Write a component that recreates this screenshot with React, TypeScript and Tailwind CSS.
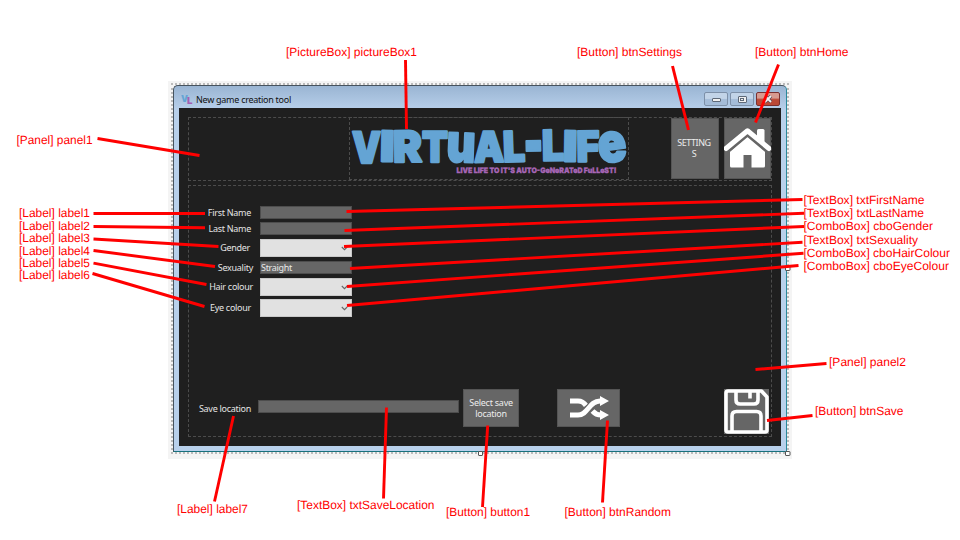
import React from "react";

type Note = { text: string; x: number; y: number; w: number; line: [number, number, number, number] };

const notes: Note[] = [
  { text: "[PictureBox] pictureBox1", x: 286, y: 56, w: 131, line: [405.5, 60, 406.5, 129] },
  { text: "[Button] btnSettings", x: 577, y: 56, w: 105, line: [672.5, 66, 688.5, 130] },
  { text: "[Button] btnHome", x: 755, y: 56, w: 93.5, line: [778.5, 64.5, 755.5, 122.5] },
  { text: "[Panel] panel1", x: 16.5, y: 143.5, w: 76, line: [97.5, 138.5, 199.5, 155.5] },
  { text: "[Label] label1", x: 19, y: 217, w: 71, line: [93.5, 213.5, 205, 213.5] },
  { text: "[Label] label2", x: 19, y: 230, w: 71, line: [93.5, 226.5, 205, 227.7] },
  { text: "[Label] label3", x: 19, y: 242.3, w: 71, line: [93.5, 239, 218.5, 246.5] },
  { text: "[Label] label4", x: 19, y: 254.5, w: 71, line: [93.5, 250.5, 215, 266.5] },
  { text: "[Label] label5", x: 19, y: 266.5, w: 71, line: [93.5, 263.2, 206.5, 284.5] },
  { text: "[Label] label6", x: 19, y: 279, w: 71, line: [92.5, 273.5, 204.5, 306.5] },
  { text: "[TextBox] txtFirstName", x: 803.5, y: 204, w: 121, line: [802.5, 199.5, 346.5, 211.5] },
  { text: "[TextBox] txtLastName", x: 803.5, y: 217, w: 120.5, line: [804, 213.3, 344.5, 230.5] },
  { text: "[ComboBox] cboGender", x: 803.5, y: 230, w: 129.5, line: [804, 226.5, 344, 246.5] },
  { text: "[TextBox] txtSexuality", x: 803.5, y: 244.3, w: 114.5, line: [802.5, 242.3, 350, 268.5] },
  { text: "[ComboBox] cboHairColour", x: 803.5, y: 257, w: 146.5, line: [803.5, 253.3, 347, 286.5] },
  { text: "[ComboBox] cboEyeColour", x: 803.5, y: 270, w: 145.5, line: [798.5, 265.5, 347, 305.5] },
  { text: "[Panel] panel2", x: 829, y: 366, w: 77, line: [826.5, 363.5, 755.5, 369.5] },
  { text: "[Button] btnSave", x: 815, y: 415, w: 88.5, line: [812.5, 415.5, 767, 420.5] },
  { text: "[Label] label7", x: 177, y: 513, w: 71, line: [214.5, 501.5, 233.5, 416] },
  { text: "[TextBox] txtSaveLocation", x: 297, y: 509, w: 137.5, line: [383.5, 498.5, 386.5, 407.5] },
  { text: "[Button] button1", x: 446, y: 516, w: 84, line: [482.5, 507, 487.7, 425.5] },
  { text: "[Button] btnRandom", x: 564.5, y: 516, w: 106.5, line: [602.5, 502.5, 607.5, 420.5] },
];

// Wordmark letters: glyph, left, width, size, baseline, tilt
const letters: [string, number, number, number, number, number][] = [
  ["V", 3, 29, 43, 44.5, 0],
  ["I", 31, 14.5, 42, 43.5, 1],
  ["R", 44, 29, 43, 44, -1],
  ["T", 73, 26, 42, 43.5, 0],
  ["u", 97.5, 29, 53, 44, 2],
  ["A", 125, 30, 42, 44, -1],
  ["L", 154, 22, 42, 43.5, -2],
  ["-", 174.5, 20, 66, 47, -1],
  ["L", 193, 22, 42, 42.5, -1],
  ["I", 214, 14.5, 42, 43.5, 1],
  ["F", 227.5, 23, 42, 43.5, -1],
  ["e", 249, 28.5, 54, 43.5, -8],
];

const dashed = "border border-dashed border-[#4c4c4c]";
const label = "text-right text-[9px] leading-[12px] tracking-[-0.28px] whitespace-nowrap text-[#e4e4e4]";
const button = "flex items-center justify-center bg-[#666] border border-[#555]";

function Logo() {
  return (
    <svg className="overflow-visible" width="278" height="61" viewBox="0 0 278 61" fontFamily="Inter, 'Noto Sans', sans-serif" fontWeight="900" textRendering="geometricPrecision">
      <g fill="#64a4d4" stroke="#64a4d4" strokeWidth="2.3" strokeLinejoin="round">
        {letters.map(([c, x, w, s, y, r], i) => (
          <text key={i} x={x - 1} y={y} fontSize={s} textLength={w} lengthAdjust="spacingAndGlyphs" transform={`rotate(${r} ${x + w / 2} 30)`}>
            {c}
          </text>
        ))}
      </g>
      <text x="106.500" y="54.800" fontSize="7.6" textLength="160" lengthAdjust="spacingAndGlyphs" fill="#a766b6" stroke="#a766b6" strokeWidth=".3">
        LIVE LIFE TO IT'S AUTO-GeNeRATeD FuLLeST!
      </text>
    </svg>
  );
}

function TitleBar() {
  return (
    <div className="flex h-[22px] shrink-0 items-start pl-[2px] pr-[1px]">
      <svg className="mt-[7px] mr-[3px] shrink-0" width="12" height="12" viewBox="0 0 12 12" fontFamily="Inter, sans-serif" fontWeight="900">
        <text x="0" y="9" fontSize="9.5" fill="#64a4d4" textLength="7" lengthAdjust="spacingAndGlyphs">V</text>
        <text x="6" y="11" fontSize="9" fill="#a45fb4" textLength="5.500" lengthAdjust="spacingAndGlyphs">L</text>
      </svg>
      <div className="mt-[8px] grow text-[9px] leading-[12px] tracking-[-0.27px] whitespace-nowrap text-[#111]">New game creation tool</div>
      <div className="mt-[6px] flex gap-[2px]">
        <div className="flex h-[14px] w-[24px] items-center justify-center rounded-[2px] border border-[#7d90a8] bg-linear-to-b from-[#c2d4e8] from-45% to-[#a4bcd8] to-55%">
          <div className="mt-[2px] h-[4px] w-[9px] rounded-[1px] border border-[#5e6978] bg-[#f0f0f0]" />
        </div>
        <div className="flex h-[14px] w-[24px] items-center justify-center rounded-[2px] border border-[#7d90a8] bg-linear-to-b from-[#c2d4e8] from-45% to-[#a4bcd8] to-55%">
          <div className="flex h-[7px] w-[9px] items-center justify-center rounded-[1px] border border-[#5e6978] bg-[#f0f0f0]">
            <div className="h-[3px] w-[4px] border border-[#5e6978]" />
          </div>
        </div>
        <div className="flex h-[14px] w-[24px] items-center justify-center rounded-[2px] border border-[#7a3030] bg-linear-to-b from-[#d79a90] from-40% to-[#bb4a38] to-55%">
          <svg width="10" height="8" viewBox="0 0 10 8">
            <path d="M2 1l6 6M8 1L2 7" stroke="#5d4a58" strokeWidth="3.4" />
            <path d="M2 1l6 6M8 1L2 7" stroke="#f2f2f2" strokeWidth="1.8" />
          </svg>
        </div>
      </div>
    </div>
  );
}

function TextField({ value }: { value?: string }) {
  return (
    <div className="h-[13px] w-[92px] border border-[#4d4d4d] bg-[#666] text-[9px] leading-[11px] tracking-[-0.3px] text-[#e8e8e8]">{value}</div>
  );
}

function Combo() {
  return (
    <div className="flex h-[18px] w-[92px] items-center justify-end border border-[#c9c9c9] bg-[#e1e1e1] pr-[3px]">
      <svg width="7" height="5" viewBox="0 0 7 5">
        <path d="M.8 1l2.7 2.7L6.2 1" fill="none" stroke="#666" strokeWidth="1.1" />
      </svg>
    </div>
  );
}

function Row({ name, gap, pad, children }: { name: string; gap: string; pad: string; children: React.ReactNode }) {
  return (
    <div className={`flex items-center ${gap}`}>
      <div className={`w-[71px] ${pad} ${label}`}>{name}</div>
      {children}
    </div>
  );
}

function Header() {
  return (
    <div className={`flex h-[64px] shrink-0 ${dashed}`}>
      <div className="w-[160px]" />
      <div className={`-mt-px h-[63px] w-[280px] ${dashed}`}>
        <Logo />
      </div>
      <div className={`ml-[42px] h-[61px] w-[48px] ${button} text-center text-[9px] leading-[11px] tracking-[-0.45px] text-[#ececec]`}>
        <div className="-mt-[2px] -ml-[2px]">
          SETTING
          <br />S
        </div>
      </div>
      <div className={`ml-[5px] h-[61px] w-[47px] ${button}`}>
        <svg className="-mt-[2px] shrink-0" width="47" height="40" viewBox="0 0 47 40">
          <path d="M23.500 8L41 23.500V38q0 1.500-1.500 1.500H27.500V27h-8v12.500H7.500Q6 39.500 6 38V23.500z" fill="#fff" />
          <path d="M2 22L23.500 4 45 22" fill="none" stroke="#666" strokeWidth="8" />
          <path d="M2 20.500L23.500 2.800 45 20.500" fill="none" stroke="#fff" strokeWidth="5" strokeLinecap="round" strokeLinejoin="round" />
          <path d="M33 2.500q0-1.500 1.500-1.500h4.500q1.500 0 1.500 1.500V16L33 9z" fill="#fff" />
        </svg>
      </div>
    </div>
  );
}

function Body() {
  return (
    <div className={`mt-[4px] flex h-[252px] shrink-0 flex-col ${dashed}`}>
      <div className="flex grow flex-col pt-[20px]">
        <Row name="First Name" gap="" pad="pr-[9px]"><TextField /></Row>
        <Row name="Last Name" gap="mt-[3px]" pad="pr-[9px]"><TextField /></Row>
        <Row name="Gender" gap="mt-[4px]" pad="pr-[10px]"><Combo /></Row>
        <Row name="Sexuality" gap="mt-[4px]" pad="pr-[7px]"><TextField value="Straight" /></Row>
        <Row name="Hair colour" gap="mt-[4px]" pad="pr-[7px]"><Combo /></Row>
        <Row name="Eye colour" gap="mt-[3px]" pad="pr-[9px]"><Combo /></Row>
      </div>
      <div className="mb-[1px] flex h-[46px] items-start">
        <div className={`mt-[14px] w-[69px] pr-[7px] ${label}`}>Save location</div>
        <div className="mt-[11px] h-[13px] w-[201px] border border-[#4d4d4d] bg-[#666]" />
        <div className={`ml-[4px] h-[38px] w-[56px] ${button} text-center text-[9px] leading-[11px] tracking-[-0.25px] text-[#ececec]`}>
          Select save
          <br />
          location
        </div>
        <div className={`ml-[38px] h-[38px] w-[63px] ${button}`}>
          <svg width="40" height="24" viewBox="0 0 40 24" fill="none" stroke="#fff" strokeWidth="5">
            <path d="M1 5h8q5 0 8 4.500" />
            <path d="M1 19h8c10 0 11-14 22-14h2" stroke="#666" strokeWidth="7" />
            <path d="M1 19h8c10 0 11-14 22-14h2" />
            <path d="M23.500 15q3.500 4 8.500 4" />
            <path d="M31 0l9 5-9 5zM31 14l9 5-9 5z" fill="#fff" stroke="none" />
          </svg>
        </div>
        <div className="ml-[104px] h-[46px] w-[46px]">
          <svg width="46" height="46" viewBox="0 0 46 46">
            <rect width="45" height="45" fill="#666" />
            <path d="M4 2h33.500L43 8v33q0 2-2 2H4q-2 0-2-2V4q0-2 2-2z" fill="none" stroke="#fff" strokeWidth="3.600" strokeLinejoin="round" />
            <path d="M12 3v8q0 4 4 4h14q4 0 4-4V3M8 42V27q0-4.500 4.500-4.500h20Q37 22.500 37 27v15M26 3v6.500" fill="none" stroke="#fff" strokeWidth="3.600" />
          </svg>
        </div>
      </div>
    </div>
  );
}

export default function App() {
  return (
    <div className="relative h-[540px] w-[960px] overflow-hidden bg-white pt-[81px] pl-[168px] font-['Noto_Sans','Open_Sans',sans-serif]">
      <div className="h-[378px] w-[624px] bg-[#f4f4f4] pt-[2px] pl-[3px]">
        <div className="h-[371px] w-[618px] border-[2px] border-dotted border-[#bbb]">
          <div className="flex h-[367px] w-[614px] flex-col rounded-t-[5px] border border-[#46535e] border-r-[#28899c] border-b-[#17717d] bg-[#b8cfea] bg-linear-to-b from-[#9ab5d3] to-[#b8d0eb] to-[24px] px-[5px]">
            <TitleBar />
            <div className="flex h-[338px] w-[602px] flex-col bg-[#1f1f1f] px-[9px] pt-[9px]">
              <Header />
              <Body />
            </div>
          </div>
        </div>
      </div>

      <svg className="absolute inset-0" width="960" height="540" viewBox="0 0 960 540" fontFamily="'Liberation Sans', Arial, sans-serif" textRendering="geometricPrecision">
        <g fill="#fff" stroke="#555">
          <rect x="478.500" y="451.500" width="4" height="4" rx=".5" />
          <rect x="785.500" y="451.500" width="4.500" height="4" rx=".5" />
          <rect x="785.500" y="266.500" width="4.500" height="4" rx=".5" />
        </g>
        {notes.map((n) => (
          <g key={n.text}>
            <line x1={n.line[0]} y1={n.line[1]} x2={n.line[2]} y2={n.line[3]} stroke="#f00" strokeWidth="2.900" />
            <text x={n.x} y={n.y} fontSize="12" textLength={n.w} lengthAdjust="spacingAndGlyphs" fill="#f00">{n.text}</text>
          </g>
        ))}
      </svg>
    </div>
  );
}
